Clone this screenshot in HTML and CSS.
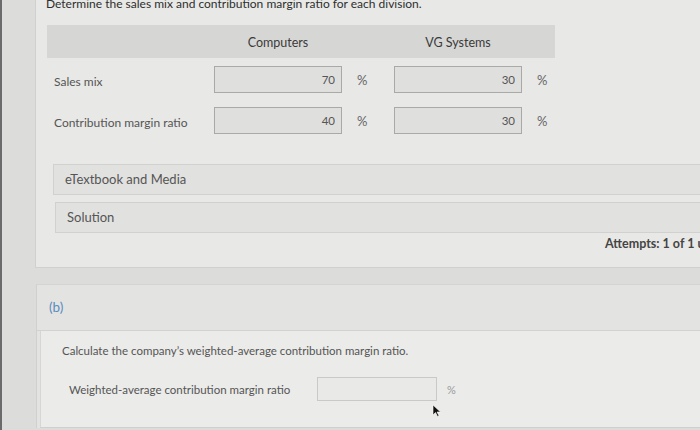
FILE: index.html
```html
<!DOCTYPE html>
<html lang="en">
<head>
    <meta charset="UTF-8">
    <meta name="viewport" content="width=device-width, initial-scale=1.0">
    <title>Sales mix and contribution margin</title>
    <link rel="stylesheet" href="styles.css">
</head>
<body>

<div class="page">

    <!-- part (a) -->
    <div class="question-panel">
        <p class="question-text">Determine the sales mix and contribution margin ratio for each division.</p>

        <div class="answer-table">
            <div class="table-head">
                <div></div>
                <div class="head-cell">Computers</div>
                <div></div>
                <div class="head-cell">VG Systems</div>
                <div></div>
            </div>

            <div class="table-row">
                <label class="row-label">Sales mix</label>
                <input class="answer-input" type="text" value="70">
                <span class="unit">%</span>
                <input class="answer-input" type="text" value="30">
                <span class="unit">%</span>
            </div>

            <div class="table-row">
                <label class="row-label">Contribution margin ratio</label>
                <input class="answer-input" type="text" value="40">
                <span class="unit">%</span>
                <input class="answer-input" type="text" value="30">
                <span class="unit">%</span>
            </div>
        </div>

        <div class="resources">
            <div class="resource-bar etext">eTextbook and Media</div>
            <div class="resource-bar solution">Solution</div>
        </div>

        <div class="attempts">Attempts: 1 of 1 used</div>
    </div>

    <!-- part (b) -->
    <div class="part-panel">
        <div class="part-head">(b)</div>
        <div class="part-body">
            <p class="part-text">Calculate the company’s weighted-average contribution margin ratio.</p>
            <div class="wa-row">
                <label class="wa-label">Weighted-average contribution margin ratio</label>
                <input class="wa-input" type="text">
                <span class="wa-unit">%</span>
                <svg class="cursor" width="9" height="13" viewBox="0 0 9 13">
                    <path d="M1 1 L1 11 L3.5 8.5 L5.5 12.5 L7 11.8 L5 8 L8.5 8 Z" fill="#111" stroke="#fff" stroke-width="0.6"/>
                </svg>
            </div>
        </div>
    </div>

</div>

</body>
</html>
```

FILE: styles.css
```css
body {
    margin: 0;
    background: #dcdcda;
    font-family: Lato, 'Open Sans', Arial, sans-serif;
    color: #555;
    overflow: hidden;
    height: 430px;
    border-left: 2px solid #6b6b6b;
}

.page {
    padding-left: 33px;
    margin-top: -4px;
}

.question-panel {
    background: #e8e8e6;
    border-left: 1px solid #d0d0ce;
    border-bottom: 1px solid #d0d0ce;
    padding: 0 0 16px 0;
}

.question-text {
    margin: 0;
    padding-left: 10px;
    font-size: 12px;
    line-height: 16px;
    color: #2e2e2e;
}

.answer-table {
    margin: 13px 0 0 11px;
    width: 508px;
}

.table-head {
    display: grid;
    grid-template-columns: 167px 128px 52px 128px 33px;
    height: 33px;
    background: #d6d6d4;
    align-items: center;
}

.head-cell {
    text-align: center;
    font-size: 12.5px;
    color: #3a3a3a;
    padding-top: 2px;
}

.table-row {
    display: grid;
    grid-template-columns: 167px 128px 52px 128px 33px;
    align-items: center;
    margin-top: 8px;
}

.table-row + .table-row {
    margin-top: 14px;
}

.row-label {
    font-size: 12px;
    color: #555;
    padding-left: 7px;
    padding-top: 3px;
}

.answer-input {
    box-sizing: border-box;
    width: 128px;
    height: 27px;
    margin: 0;
    border: 1px solid #a9a9a7;
    background: #dfdfdd;
    font-family: inherit;
    font-size: 11.5px;
    color: #555;
    text-align: right;
    padding: 0 6px;
}

.unit {
    font-size: 13px;
    color: #666;
    padding-left: 15px;
}

.resources {
    margin-top: 30px;
    display: flex;
    flex-direction: column;
    gap: 7px;
}

.resource-bar {
    height: 29px;
    line-height: 29px;
    background: #e1e1df;
    border: 1px solid #d1d1cf;
    border-right: none;
    font-size: 13px;
    color: #555;
}

.etext {
    margin-left: 17px;
    padding-left: 11px;
}

.solution {
    margin-left: 19px;
    padding-left: 11px;
}

.attempts {
    margin: 3px 0 0 569px;
    white-space: nowrap;
    font-size: 12.5px;
    font-weight: bold;
    color: #444;
}

.part-panel {
    margin-top: 16px;
    margin-left: 1px;
    border-left: 1px solid #d0d0ce;
    border-top: 1px solid #d4d4d2;
    background: #e3e3e1;
}

.part-head {
    height: 45px;
    line-height: 45px;
    padding-left: 12px;
    font-size: 13.5px;
    color: #5b8cc0;
    border-bottom: 1px solid #d2d2d0;
}

.part-body {
    margin-left: 3px;
    background: #ebebe9;
    border-left: 1px solid #d6d6d4;
    border-bottom: 1px solid #cfcfcd;
    height: 97px;
    padding-top: 13px;
    box-sizing: border-box;
}

.part-text {
    margin: 0 0 0 21px;
    font-size: 11.5px;
    color: #555;
}

.wa-row {
    position: relative;
    display: flex;
    align-items: center;
    margin-top: 20px;
    padding-left: 28px;
}

.wa-label {
    width: 248px;
    font-size: 11.5px;
    color: #555;
}

.wa-input {
    box-sizing: border-box;
    width: 120px;
    height: 24px;
    margin: 0;
    border: 1px solid #c9c9c7;
    background: #e9e9e7;
}

.wa-unit {
    padding-left: 10px;
    font-size: 11px;
    color: #999;
}

.cursor {
    position: absolute;
    left: 391px;
    top: 27px;
}
```
